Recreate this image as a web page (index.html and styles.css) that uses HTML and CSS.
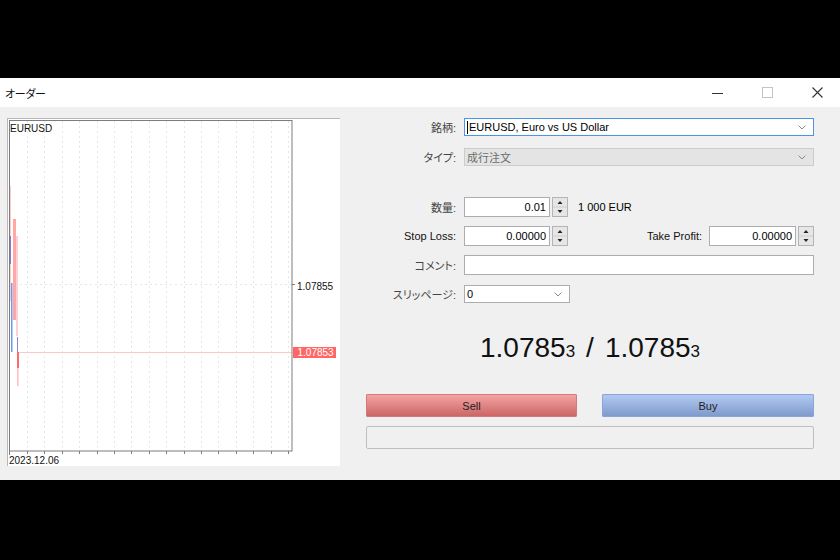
FILE: index.html
```html
<!DOCTYPE html>
<html lang="ja">
<head>
<meta charset="utf-8">
<title>オーダー</title>
<link rel="stylesheet" href="styles.css">
</head>
<body>
<div class="window">
  <div class="titlebar">
    <span class="title">オーダー</span>
    <div class="controls">
      <span class="ctl"><svg width="11" height="10" viewBox="0 0 11 10"><line x1="0" y1="5.5" x2="11" y2="5.5" stroke="#333" stroke-width="1"/></svg></span>
      <span class="ctl"><svg width="11" height="11" viewBox="0 0 11 11"><rect x="0.5" y="0.5" width="10" height="10" fill="none" stroke="#c4c4c4"/></svg></span>
      <span class="ctl"><svg width="11" height="11" viewBox="0 0 11 11"><path d="M0.5 0.5 L10.5 10.5 M10.5 0.5 L0.5 10.5" stroke="#333" stroke-width="1.1"/></svg></span>
    </div>
  </div>
  <div class="content">
    <div class="chart">
      <svg width="333" height="348" viewBox="0 0 333 348">
        <rect x="0" y="0" width="333" height="348" fill="#fff"/>
        <line x1="0.5" y1="0" x2="0.5" y2="348" stroke="#b8b8b8"/>
        <line x1="0" y1="0.5" x2="333" y2="0.5" stroke="#b8b8b8"/>
        <g stroke="#e6e6e6" stroke-dasharray="2 3">
          <line x1="20.5" y1="3" x2="20.5" y2="333"/>
          <line x1="37.5" y1="3" x2="37.5" y2="333"/>
          <line x1="55.5" y1="3" x2="55.5" y2="333"/>
          <line x1="72.5" y1="3" x2="72.5" y2="333"/>
          <line x1="90.5" y1="3" x2="90.5" y2="333"/>
          <line x1="107.5" y1="3" x2="107.5" y2="333"/>
          <line x1="124.5" y1="3" x2="124.5" y2="333"/>
          <line x1="142.5" y1="3" x2="142.5" y2="333"/>
          <line x1="159.5" y1="3" x2="159.5" y2="333"/>
          <line x1="177.5" y1="3" x2="177.5" y2="333"/>
          <line x1="194.5" y1="3" x2="194.5" y2="333"/>
          <line x1="211.5" y1="3" x2="211.5" y2="333"/>
          <line x1="229.5" y1="3" x2="229.5" y2="333"/>
          <line x1="246.5" y1="3" x2="246.5" y2="333"/>
          <line x1="264.5" y1="3" x2="264.5" y2="333"/>
          <line x1="281.5" y1="3" x2="281.5" y2="333"/>
          <line x1="3" y1="166.5" x2="285" y2="166.5"/>
        </g>
        <line x1="12" y1="234.5" x2="285" y2="234.5" stroke="#ffc8c8"/>
        <rect x="2" y="68" width="2" height="115" fill="#ffcccc"/>
        <rect x="2" y="85" width="1" height="32" fill="#ff8a8a"/>
        <rect x="3" y="118" width="1" height="28" fill="#7c7cd6"/>
        <rect x="4" y="165" width="1.5" height="69" fill="#6a9af2"/>
        <rect x="6" y="101" width="3" height="101" fill="#ffa6a6"/>
        <rect x="9" y="118" width="2" height="100" fill="#ffd0d0"/>
        <rect x="10" y="219" width="1" height="15" fill="#9a80d0"/>
        <rect x="10" y="234" width="2" height="16" fill="#ff6a6a"/>
        <rect x="10" y="250" width="1.5" height="18" fill="#ffbcbc"/>
        <rect x="2.5" y="2.5" width="282.5" height="330.5" fill="none" stroke="#7c7c7c"/>
        <g stroke="#7c7c7c">
          <line x1="2.5" y1="333" x2="2.5" y2="337"/>
          <line x1="20.5" y1="333" x2="20.5" y2="336"/>
          <line x1="37.5" y1="333" x2="37.5" y2="336"/>
          <line x1="55.5" y1="333" x2="55.5" y2="336"/>
          <line x1="72.5" y1="333" x2="72.5" y2="336"/>
          <line x1="90.5" y1="333" x2="90.5" y2="336"/>
          <line x1="107.5" y1="333" x2="107.5" y2="336"/>
          <line x1="124.5" y1="333" x2="124.5" y2="336"/>
          <line x1="142.5" y1="333" x2="142.5" y2="336"/>
          <line x1="159.5" y1="333" x2="159.5" y2="336"/>
          <line x1="177.5" y1="333" x2="177.5" y2="336"/>
          <line x1="194.5" y1="333" x2="194.5" y2="336"/>
          <line x1="211.5" y1="333" x2="211.5" y2="336"/>
          <line x1="229.5" y1="333" x2="229.5" y2="336"/>
          <line x1="246.5" y1="333" x2="246.5" y2="336"/>
          <line x1="264.5" y1="333" x2="264.5" y2="336"/>
          <line x1="281.5" y1="333" x2="281.5" y2="336"/>
          <line x1="285" y1="166.5" x2="288" y2="166.5"/>
        </g>
        <text class="ct" x="3" y="14">EURUSD</text>
        <text class="ct" x="290" y="171.5">1.07855</text>
        <rect x="286" y="229" width="43" height="11" fill="#ff6666"/>
        <text class="ct light" x="290.5" y="238">1.07853</text>
        <text class="ct" x="2" y="345.5">2023.12.06</text>
      </svg>
    </div>
    <div class="form">
      <div class="row r1">
        <span class="lbl">銘柄:</span>
        <div class="combo focus wide">
          <span class="caret"></span><span class="val">EURUSD, Euro vs US Dollar</span>
          <svg class="chev" width="8" height="5" viewBox="0 0 8 5"><path d="M0.5 0.5 L4 4 L7.5 0.5" fill="none" stroke="#8a8a8a"/></svg>
        </div>
      </div>
      <div class="row r2">
        <span class="lbl">タイプ:</span>
        <div class="combo disabled wide">
          <span class="val">成行注文</span>
          <svg class="chev" width="8" height="5" viewBox="0 0 8 5"><path d="M0.5 0.5 L4 4 L7.5 0.5" fill="none" stroke="#8a8a8a"/></svg>
        </div>
      </div>
      <div class="row r3">
        <span class="lbl">数量:</span>
        <div class="edit num">0.01</div>
        <div class="spin">
          <svg width="16" height="20" viewBox="0 0 16 20"><rect x="0.5" y="0.5" width="15" height="19" fill="#e6e6e6" stroke="#b4b4b4"/><line x1="1" y1="10" x2="15" y2="10" stroke="#cfcfcf"/><path d="M5.5 7 L8 4 L10.5 7 Z" fill="#222"/><path d="M5.5 13 L8 16 L10.5 13 Z" fill="#222"/></svg>
        </div>
        <span class="info">1 000 EUR</span>
      </div>
      <div class="row r4">
        <span class="lbl dark">Stop Loss:</span>
        <div class="edit num">0.00000</div>
        <div class="spin">
          <svg width="16" height="20" viewBox="0 0 16 20"><rect x="0.5" y="0.5" width="15" height="19" fill="#e6e6e6" stroke="#b4b4b4"/><line x1="1" y1="10" x2="15" y2="10" stroke="#cfcfcf"/><path d="M5.5 7 L8 4 L10.5 7 Z" fill="#222"/><path d="M5.5 13 L8 16 L10.5 13 Z" fill="#222"/></svg>
        </div>
        <span class="lbl2 dark">Take Profit:</span>
        <div class="edit num tp">0.00000</div>
        <div class="spin">
          <svg width="16" height="20" viewBox="0 0 16 20"><rect x="0.5" y="0.5" width="15" height="19" fill="#e6e6e6" stroke="#b4b4b4"/><line x1="1" y1="10" x2="15" y2="10" stroke="#cfcfcf"/><path d="M5.5 7 L8 4 L10.5 7 Z" fill="#222"/><path d="M5.5 13 L8 16 L10.5 13 Z" fill="#222"/></svg>
        </div>
      </div>
      <div class="row r5">
        <span class="lbl">コメント:</span>
        <div class="edit wide"></div>
      </div>
      <div class="row r6">
        <span class="lbl">スリッページ:</span>
        <div class="combo small">
          <span class="val">0</span>
          <svg class="chev" width="8" height="5" viewBox="0 0 8 5"><path d="M0.5 0.5 L4 4 L7.5 0.5" fill="none" stroke="#8a8a8a"/></svg>
        </div>
      </div>
      <div class="price">1.0785<span class="pip">3</span><span class="sep">/</span>1.0785<span class="pip">3</span></div>
      <div class="buttons">
        <div class="btn sell">Sell</div>
        <div class="btn buy">Buy</div>
      </div>
      <div class="progress"></div>
    </div>
  </div>
</div>
</body>
</html>
```
FILE: styles.css
```css
* { box-sizing: border-box; }
html, body { margin: 0; padding: 0; }
body {
  background: #000;
  width: 840px;
  height: 560px;
  overflow: hidden;
  font-family: "Liberation Sans", "Noto Sans CJK JP", sans-serif;
  font-size: 11px;
  color: #000;
  font-feature-settings: "palt";
}
.window {
  margin-top: 78px;
  height: 402px;
  background: #f0f0f0;
  overflow: hidden;
}
.titlebar {
  height: 29px;
  background: #fff;
  display: flex;
  align-items: center;
  justify-content: space-between;
  padding-left: 5px;
}
.title {
  font-size: 11px;
  color: #111;
  letter-spacing: -0.3px;
}
.controls {
  display: flex;
  margin-right: -2px;
}
.ctl {
  width: 50px;
  height: 29px;
  display: flex;
  align-items: center;
  justify-content: center;
}
.ctl svg { display: block; }
.content {
  display: flex;
  padding: 11px 0 0 7px;
  gap: 26px;
}
.chart {
  width: 333px;
  height: 348px;
  flex: none;
}
.chart svg { display: block; }
.ct {
  font-family: "Liberation Sans", sans-serif;
  font-size: 10px;
  fill: #111;
}
.ct.light { fill: #fff; }
.form {
  width: 448px;
  flex: none;
  display: flex;
  flex-direction: column;
}
.row {
  display: flex;
  align-items: center;
}
.r1 { height: 18px; }
.r2 { height: 18px; margin-top: 12px; }
.r3 { height: 20px; margin-top: 31px; }
.r4 { height: 20px; margin-top: 9px; }
.r5 { height: 20px; margin-top: 9px; }
.r6 { height: 18px; margin-top: 10px; }
.lbl {
  width: 90px;
  flex: none;
  text-align: right;
  margin-right: 8px;
  color: #444;
  white-space: nowrap;
}
.lbl.dark, .lbl2.dark { color: #111; }
.lbl2 {
  margin-left: auto;
  margin-right: 7px;
  white-space: nowrap;
}
.combo {
  height: 18px;
  border: 1px solid #adadad;
  background: #fff;
  display: flex;
  align-items: center;
  padding-left: 2px;
  padding-right: 7px;
}
.combo .val { flex: 1; white-space: nowrap; }
.combo .chev { flex: none; display: block; }
.combo.wide { width: 350px; }
.combo.small { width: 106px; }
.combo.focus { border-color: #4d94e6; }
.combo.disabled {
  background: #e4e4e4;
  border-color: #cccccc;
  color: #6d6d6d;
}
.caret {
  width: 1px;
  height: 13px;
  background: #000;
  flex: none;
  margin-right: 1px;
}
.edit {
  height: 20px;
  border: 1px solid #adadad;
  background: #fff;
  display: flex;
  align-items: center;
}
.edit.num {
  width: 86px;
  justify-content: flex-end;
  padding-right: 3px;
}
.edit.num.tp { width: 87px; }
.edit.wide { width: 350px; }
.spin {
  width: 16px;
  height: 20px;
  margin-left: 2px;
  flex: none;
}
.spin svg { display: block; }
.info { margin-left: 10px; }
.price {
  height: 91px;
  display: flex;
  justify-content: center;
  align-items: baseline;
  padding-top: 29px;
  font-size: 28px;
  color: #111;
}
.pip { font-size: 17px; }
.sep { margin: 0 11px 0 11px; }
.buttons {
  display: flex;
  justify-content: space-between;
}
.btn {
  width: 211px;
  height: 23px;
  display: flex;
  align-items: center;
  justify-content: center;
  color: #222;
  border-radius: 1px;
}
.sell {
  background: linear-gradient(#f4a3a3, #cc6666);
  border: 1px solid #d67878;
}
.buy {
  width: 212px;
  background: linear-gradient(#b2c9f2, #7f9bcc);
  border: 1px solid #88a4d8;
}
.progress {
  margin-top: 9px;
  height: 23px;
  border: 1px solid #bfbfbf;
  border-radius: 2px;
  background: #f0f0f0;
}
```
